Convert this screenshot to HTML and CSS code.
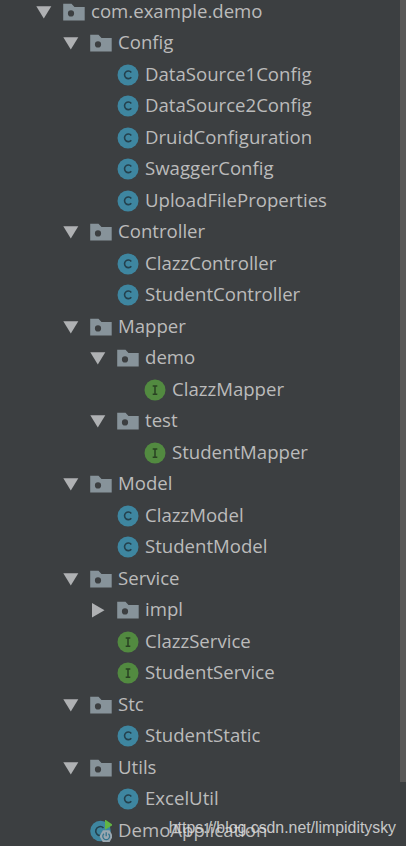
FILE: index.html
```html
<!DOCTYPE html>
<html lang="en">
<head>
    <meta charset="UTF-8">
    <meta name="viewport" content="width=device-width, initial-scale=1.0">
    <title>Project</title>
    <link rel="stylesheet" href="styles.css">
</head>
<body>
    <svg class="symbols" aria-hidden="true">
        <symbol id="down" viewBox="0 0 16 22"><path d="M.3 5.3h15L7.8 17.6z" fill="#afb1b3"/></symbol>
        <symbol id="right" viewBox="0 0 16 22"><path d="M2 4v14.5l12.5-7.2z" fill="#afb1b3"/></symbol>
        <symbol id="package" viewBox="0 0 22 22"><path fill-rule="evenodd" d="M.2 2.7h8.3l3 3.2h10.2v13.5H.2zM8 9.3a3.1 3.1 0 1 0 0 6.2 3.1 3.1 0 0 0 0-6.2z" fill="#87939a"/></symbol>
        <symbol id="class" viewBox="0 0 22 22"><circle cx="11" cy="11" r="10.5" fill="#3e86a0"/><path d="M14.3 8.4A3.8 3.8 0 1 0 14.3 13.2" fill="none" stroke="#24414d" stroke-width="1.6"/></symbol>
        <symbol id="interface" viewBox="0 0 22 22"><circle cx="11" cy="11" r="10.5" fill="#528a40"/><path d="M8.7 6.9h4.6M8.7 15.3h4.6M11 7v8" fill="none" stroke="#294122" stroke-width="1.5"/></symbol>
        <symbol id="app" viewBox="0 0 22 22"><circle cx="10.5" cy="11" r="10.3" fill="#3e86a0"/><path d="M13.5 8A4.5 4.5 0 1 0 11 15.5" fill="none" stroke="#24414d" stroke-width="1.6"/><path d="M15-.5v10.3l8-5z" fill="#62b543"/><path d="M12.9 10.2h6.6l3.4 6-3.4 6h-6.6l-3.4-6z" fill="#9aa7b0"/><path d="M14 13.7a3.4 3.4 0 1 0 4.4 0M16.2 12.3v4" fill="none" stroke="#35738c" stroke-width="1.3"/></symbol>
    </svg>
    <div class="panel">
        <ul class="tree">
            <li>
                <div class="row"><svg class="arrow"><use href="#down"/></svg><svg class="icon"><use href="#package"/></svg><span>com.example.demo</span></div>
                <ul>
                    <li>
                        <div class="row"><svg class="arrow"><use href="#down"/></svg><svg class="icon"><use href="#package"/></svg><span>Config</span></div>
                        <ul>
                            <li class="row leaf"><svg class="icon"><use href="#class"/></svg><span>DataSource1Config</span></li>
                            <li class="row leaf"><svg class="icon"><use href="#class"/></svg><span>DataSource2Config</span></li>
                            <li class="row leaf"><svg class="icon"><use href="#class"/></svg><span>DruidConfiguration</span></li>
                            <li class="row leaf"><svg class="icon"><use href="#class"/></svg><span>SwaggerConfig</span></li>
                            <li class="row leaf"><svg class="icon"><use href="#class"/></svg><span>UploadFileProperties</span></li>
                        </ul>
                    </li>
                    <li>
                        <div class="row"><svg class="arrow"><use href="#down"/></svg><svg class="icon"><use href="#package"/></svg><span>Controller</span></div>
                        <ul>
                            <li class="row leaf"><svg class="icon"><use href="#class"/></svg><span>ClazzController</span></li>
                            <li class="row leaf"><svg class="icon"><use href="#class"/></svg><span>StudentController</span></li>
                        </ul>
                    </li>
                    <li>
                        <div class="row"><svg class="arrow"><use href="#down"/></svg><svg class="icon"><use href="#package"/></svg><span>Mapper</span></div>
                        <ul>
                            <li>
                                <div class="row"><svg class="arrow"><use href="#down"/></svg><svg class="icon"><use href="#package"/></svg><span>demo</span></div>
                                <ul>
                                    <li class="row leaf"><svg class="icon"><use href="#interface"/></svg><span>ClazzMapper</span></li>
                                </ul>
                            </li>
                            <li>
                                <div class="row"><svg class="arrow"><use href="#down"/></svg><svg class="icon"><use href="#package"/></svg><span>test</span></div>
                                <ul>
                                    <li class="row leaf"><svg class="icon"><use href="#interface"/></svg><span>StudentMapper</span></li>
                                </ul>
                            </li>
                        </ul>
                    </li>
                    <li>
                        <div class="row"><svg class="arrow"><use href="#down"/></svg><svg class="icon"><use href="#package"/></svg><span>Model</span></div>
                        <ul>
                            <li class="row leaf"><svg class="icon"><use href="#class"/></svg><span>ClazzModel</span></li>
                            <li class="row leaf"><svg class="icon"><use href="#class"/></svg><span>StudentModel</span></li>
                        </ul>
                    </li>
                    <li>
                        <div class="row"><svg class="arrow"><use href="#down"/></svg><svg class="icon"><use href="#package"/></svg><span>Service</span></div>
                        <ul>
                            <li class="row"><svg class="arrow"><use href="#right"/></svg><svg class="icon"><use href="#package"/></svg><span>impl</span></li>
                            <li class="row leaf"><svg class="icon"><use href="#interface"/></svg><span>ClazzService</span></li>
                            <li class="row leaf"><svg class="icon"><use href="#interface"/></svg><span>StudentService</span></li>
                        </ul>
                    </li>
                    <li>
                        <div class="row"><svg class="arrow"><use href="#down"/></svg><svg class="icon"><use href="#package"/></svg><span>Stc</span></div>
                        <ul>
                            <li class="row leaf"><svg class="icon"><use href="#class"/></svg><span>StudentStatic</span></li>
                        </ul>
                    </li>
                    <li>
                        <div class="row"><svg class="arrow"><use href="#down"/></svg><svg class="icon"><use href="#package"/></svg><span>Utils</span></div>
                        <ul>
                            <li class="row leaf"><svg class="icon"><use href="#class"/></svg><span>ExcelUtil</span></li>
                        </ul>
                    </li>
                    <li class="row leaf"><svg class="icon"><use href="#app"/></svg><span>DemoApplication</span></li>
                </ul>
            </li>
        </ul>
        <div class="scrollbar"></div>
        <div class="watermark">https://blog.csdn.net/limpiditysky</div>
    </div>
</body>
</html>
```
FILE: styles.css
```css
body {
    margin: 0;
    background-color: #3c3f41;
    color: #bbbbbb;
    font-family: "Open Sans", "Noto Sans", sans-serif;
    font-size: 18.6px;
}

.symbols {
    display: none;
}

.panel {
    position: relative;
    display: flex;
    justify-content: space-between;
    height: 846px;
    overflow: hidden;
}

ul {
    margin: 0;
    padding: 0 0 0 27px;
    list-style: none;
}

.tree {
    margin-top: -4px;
    padding-left: 36px;
}

.row {
    display: flex;
    align-items: center;
    height: 31.5px;
    line-height: 30px;
    white-space: nowrap;
}

.row span {
    padding-bottom: 2px;
}

.leaf {
    padding-left: 27px;
}

.arrow {
    width: 16px;
    height: 22px;
    margin-right: 11px;
}

.icon {
    width: 22px;
    height: 22px;
    margin-right: 6px;
    overflow: visible;
}

.scrollbar {
    width: 6px;
    height: 782px;
    background-color: #595857;
}

.watermark {
    position: absolute;
    right: 10px;
    bottom: 7px;
    color: rgba(225, 225, 225, 0.85);
    font-family: "Liberation Sans", Arial, sans-serif;
    font-size: 15.85px;
    line-height: 22px;
}
```
